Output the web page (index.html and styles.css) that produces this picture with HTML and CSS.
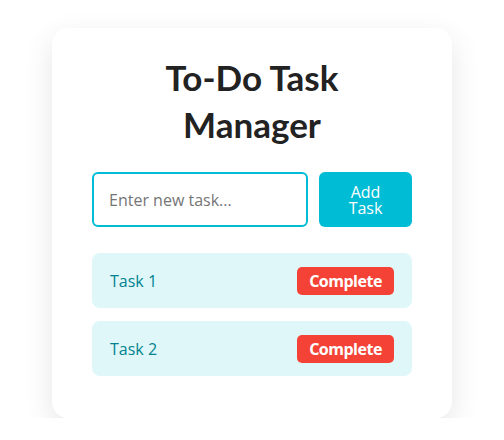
FILE: index.html
```html
<!DOCTYPE html>
<html>
<head>
<meta charset="utf-8">
<link rel="stylesheet" href="styles.css">
</head>
<body>
<div class="card">
  <h1 class="title">To-Do Task Manager</h1>
  <div class="add-row">
    <input class="task-input" type="text" placeholder="Enter new task...">
    <button class="add-btn">Add Task</button>
  </div>
  <ul class="task-list">
    <li class="task"><span class="task-name">Task 1</span><button class="complete-btn">Complete</button></li>
    <li class="task"><span class="task-name">Task 2</span><button class="complete-btn">Complete</button></li>
  </ul>
</div>
</body>
</html>
```
FILE: styles.css
```css
html, body {
  margin: 0;
  background: #ffffff;
}
body {
  padding-top: 28px;
  font-family: "Open Sans", "Liberation Sans", sans-serif;
}
.card {
  width: 400px;
  box-sizing: border-box;
  margin: 0 auto;
  padding: 26px 40px 42px;
  background: #fff;
  border-radius: 16px;
  box-shadow: 0 10px 30px rgba(0, 0, 0, 0.1);
}
.title {
  margin: 0 auto 24px;
  width: 220px;
  text-align: center;
  font-family: Lato, "Liberation Sans", sans-serif;
  font-weight: 700;
  font-size: 35px;
  line-height: 47px;
  color: #222;
}
.add-row {
  display: flex;
  gap: 11px;
  height: 55px;
  margin-bottom: 26px;
}
.task-input {
  flex: 1;
  min-width: 0;
  box-sizing: border-box;
  height: 55px;
  border: 2px solid #00bcd4;
  border-radius: 6px;
  padding: 0 15px;
  font-family: "Open Sans", sans-serif;
  font-size: 16px;
  color: #333;
  outline: none;
}
.task-input::placeholder {
  color: #757575;
}
.add-btn {
  width: 93px;
  height: 55px;
  border: none;
  border-radius: 6px;
  background: #00bcd4;
  color: #fff;
  font-family: "Open Sans", sans-serif;
  font-size: 16px;
  line-height: 16px;
  padding: 0 20px;
}
.task-list {
  list-style: none;
  margin: 0;
  padding: 0;
  display: flex;
  flex-direction: column;
  gap: 13px;
}
.task {
  display: flex;
  align-items: center;
  justify-content: space-between;
  height: 55px;
  padding: 0 18px;
  background: #e0f7fa;
  border-radius: 8px;
}
.task-name {
  font-size: 16px;
  color: #00838f;
}
.complete-btn {
  height: 28px;
  width: 97px;
  border: none;
  border-radius: 5px;
  background: #f44336;
  color: #fff;
  font-family: "Open Sans", sans-serif;
  font-weight: 700;
  font-size: 16px;
  letter-spacing: -0.5px;
  padding: 0;
}
```
